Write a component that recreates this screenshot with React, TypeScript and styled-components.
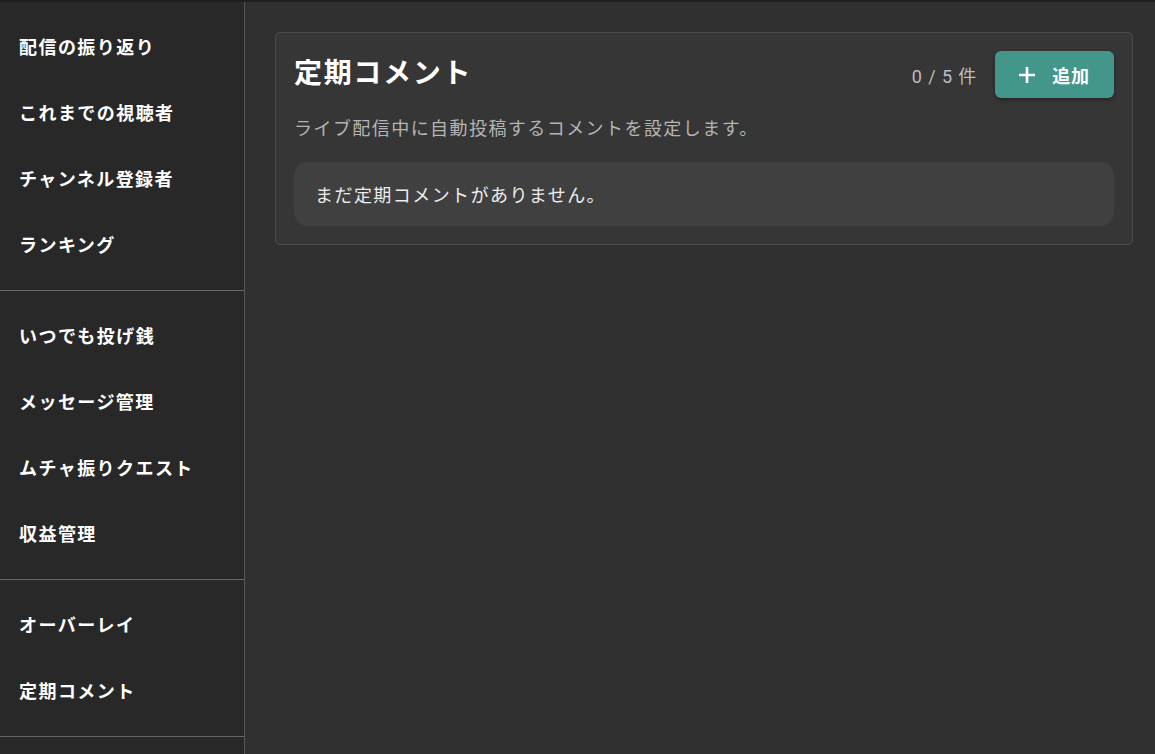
import React from 'react';
import styled, { createGlobalStyle } from 'styled-components';

const GlobalStyle = createGlobalStyle`
  html, body {
    margin: 0;
    padding: 0;
    background: #303030;
  }
  body {
    font-family: Roboto, "Noto Sans CJK JP", "Noto Sans", sans-serif;
    color: #ffffff;
  }
  * {
    box-sizing: border-box;
  }
`;

const Shell = styled.div`
  display: flex;
  height: 100vh;
  border-top: 2px solid #1f1f1f;
  overflow: hidden;
`;

const Sidebar = styled.nav`
  width: 245px;
  flex-shrink: 0;
  background: #282828;
  border-right: 1px solid #555555;
`;

const NavGroup = styled.ul`
  list-style: none;
  margin: 0;
  padding: 12px 0;
  border-bottom: 1px solid #666666;
`;

const NavItem = styled.li<{ $active?: boolean }>`
  height: 66px;
  display: flex;
  align-items: center;
  padding-left: 19px;
  padding-bottom: 2px;
  font-size: 18px;
  font-weight: 700;
  letter-spacing: 0.08em;
  color: #ffffff;
  cursor: pointer;
`;

const Main = styled.main`
  flex: 1;
  padding: 30px 22px 30px 30px;
`;

const Card = styled.section`
  background: #363636;
  border: 1px solid #4c4c4c;
  border-radius: 5px;
  padding: 18px;
`;

const CardHeader = styled.div`
  display: flex;
  align-items: center;
  justify-content: space-between;
`;

const Title = styled.h1`
  margin: 0;
  font-size: 28px;
  font-weight: 600;
  letter-spacing: 0.06em;
  line-height: 1.3;
`;

const HeaderRight = styled.div`
  display: flex;
  align-items: center;
  gap: 18px;
`;

const Count = styled.span`
  font-size: 18px;
  color: #bdbdbd;
  letter-spacing: 0.05em;
`;

const AddButton = styled.button`
  display: flex;
  align-items: center;
  gap: 16px;
  height: 47px;
  padding: 0 24px 0 23px;
  border: none;
  border-radius: 6px;
  background: #43968a;
  color: #ffffff;
  font-family: inherit;
  font-size: 18px;
  font-weight: 700;
  letter-spacing: 0.05em;
  box-shadow: 0 2px 4px rgba(0, 0, 0, 0.35);
  cursor: pointer;
`;

const Description = styled.p`
  margin: 17px 0 0;
  font-size: 18px;
  line-height: 28px;
  letter-spacing: 0.08em;
  color: #b4b4b4;
`;

const EmptyBox = styled.div`
  margin-top: 19px;
  height: 64px;
  display: flex;
  align-items: center;
  padding-left: 21px;
  border-radius: 14px;
  background: #404040;
  font-size: 18px;
  letter-spacing: 0.08em;
  color: #ececec;
`;

const PlusIcon = () => (
  <svg width="18" height="18" viewBox="0 0 18 18" aria-hidden="true">
    <path d="M9 1v16M1 9h16" stroke="#ffffff" strokeWidth="2.6" fill="none" />
  </svg>
);

const groups: string[][] = [
  ['配信の振り返り', 'これまでの視聴者', 'チャンネル登録者', 'ランキング'],
  ['いつでも投げ銭', 'メッセージ管理', 'ムチャ振りクエスト', '収益管理'],
  ['オーバーレイ', '定期コメント'],
];

const App: React.FC = () => {
  return (
    <>
      <GlobalStyle />
      <Shell>
        <Sidebar>
          {groups.map((items, i) => (
            <NavGroup key={i}>
              {items.map((label) => (
                <NavItem key={label} $active={label === '定期コメント'}>
                  {label}
                </NavItem>
              ))}
            </NavGroup>
          ))}
        </Sidebar>
        <Main>
          <Card>
            <CardHeader>
              <Title>定期コメント</Title>
              <HeaderRight>
                <Count>0 / 5 件</Count>
                <AddButton>
                  <PlusIcon />
                  追加
                </AddButton>
              </HeaderRight>
            </CardHeader>
            <Description>ライブ配信中に自動投稿するコメントを設定します。</Description>
            <EmptyBox>まだ定期コメントがありません。</EmptyBox>
          </Card>
        </Main>
      </Shell>
    </>
  );
};

export default App;
